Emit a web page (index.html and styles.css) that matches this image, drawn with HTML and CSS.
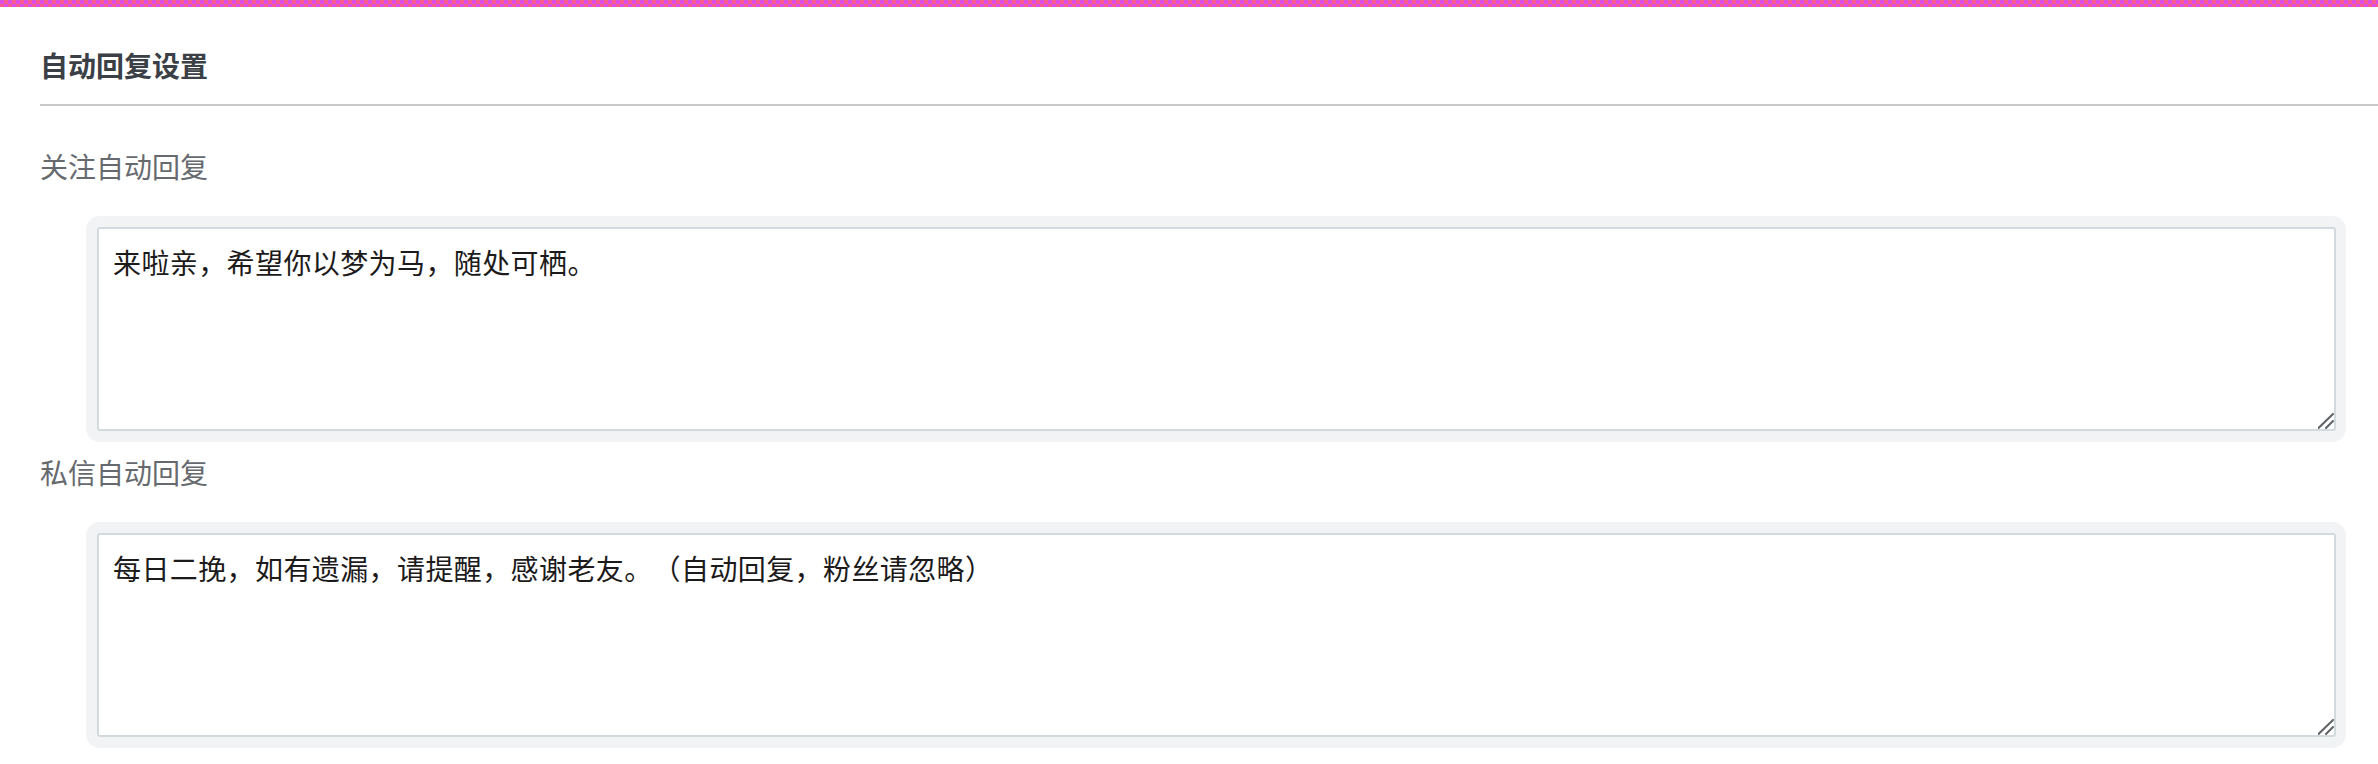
FILE: index.html
```html
<!DOCTYPE html>
<html lang="zh-CN">
<head>
<meta charset="utf-8">
<title>自动回复设置</title>
<link rel="stylesheet" href="styles.css">
</head>
<body>
<div class="topbar"></div>
<main class="page">
  <h1 class="title">自动回复设置</h1>
  <section class="field first">
    <div class="label">关注自动回复</div>
    <div class="frame">
      <textarea class="input">来啦亲，希望你以梦为马，随处可栖。</textarea>
      <svg class="grip" width="16" height="16" viewBox="0 0 16 16" aria-hidden="true"><path d="M0.5 15 L15 1 M8 15 L15 8" stroke="#5f6366" stroke-width="2" stroke-linecap="round" fill="none"/></svg>
    </div>
  </section>
  <section class="field">
    <div class="label">私信自动回复</div>
    <div class="frame">
      <textarea class="input">每日二挽，如有遗漏，请提醒，感谢老友。（自动回复，粉丝请忽略）</textarea>
      <svg class="grip" width="16" height="16" viewBox="0 0 16 16" aria-hidden="true"><path d="M0.5 15 L15 1 M8 15 L15 8" stroke="#5f6366" stroke-width="2" stroke-linecap="round" fill="none"/></svg>
    </div>
  </section>
</main>
</body>
</html>
```
FILE: styles.css
```css
* { box-sizing: border-box; }
html, body {
  margin: 0;
  padding: 0;
  background: #ffffff;
  font-family: "Noto Sans CJK SC", "Noto Sans", sans-serif;
}
.topbar {
  height: 7px;
  background-color: #f05ab0;
  background-image: repeating-conic-gradient(#ff5c8e 0 25%, #d84fe6 0 50%);
  background-size: 8px 8px;
}
.page {
  padding-left: 40px;
}
.title {
  margin: 0;
  padding: 38px 0 19px 0;
  font-size: 28px;
  line-height: 40px;
  font-weight: 700;
  color: #3b4046;
  border-bottom: 2px solid #c9c9c9;
}
.field {
  display: flex;
  flex-direction: column;
  padding-top: 10px;
}
.field.first {
  padding-top: 40px;
}
.label {
  font-size: 28px;
  line-height: 40px;
  color: #666a6e;
}
.frame {
  position: relative;
  margin: 30px 32px 0 46px;
  padding: 11px 10px 11px 11px;
  background: #f1f3f4;
  border-radius: 14px;
}
.input {
  display: block;
  width: 100%;
  height: 204px;
  margin: 0;
  padding: 12px 14px;
  border: 2px solid #d3dadd;
  border-radius: 3px;
  background: #ffffff;
  color: #1c1a1a;
  font-family: "Noto Sans CJK SC", "Noto Sans", sans-serif;
  font-size: 28px;
  line-height: 42px;
  letter-spacing: 0.4px;
  text-spacing-trim: space-all;
  resize: none;
  outline: none;
}
.grip {
  position: absolute;
  right: 12px;
  bottom: 13px;
  pointer-events: none;
}
```
